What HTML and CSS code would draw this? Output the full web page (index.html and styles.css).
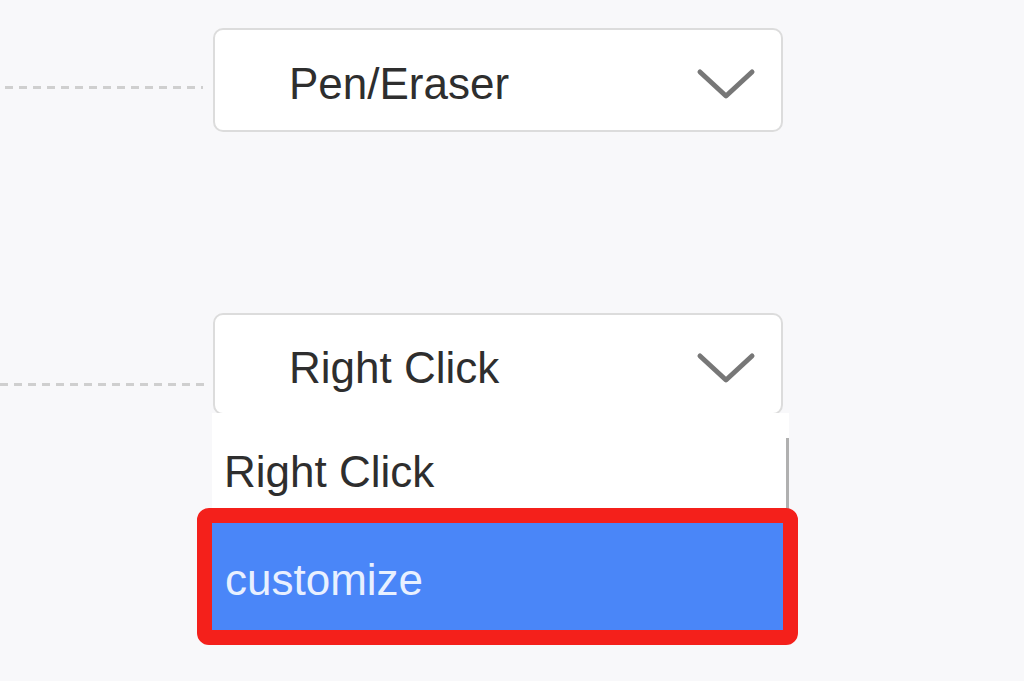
FILE: index.html
```html
<!DOCTYPE html>
<html>
<head>
<meta charset="utf-8">
<link rel="stylesheet" href="styles.css">
</head>
<body>
<div class="page">
  <div class="row row-1">
    <div class="dash dash-1"></div>
    <div class="select-group">
      <div class="select select-1">
        <span class="select-label">Pen/Eraser</span>
        <svg class="chevron" width="60" height="32" viewBox="0 0 60 32"><polyline points="4,4 30,28 56,4" fill="none" stroke="#777" stroke-width="5" stroke-linecap="round" stroke-linejoin="round"/></svg>
      </div>
    </div>
  </div>
  <div class="row row-2">
    <div class="dash dash-2"></div>
    <div class="select-group">
      <div class="select select-2">
        <span class="select-label">Right Click</span>
        <svg class="chevron" width="60" height="32" viewBox="0 0 60 32"><polyline points="4,4 30,28 56,4" fill="none" stroke="#777" stroke-width="5" stroke-linecap="round" stroke-linejoin="round"/></svg>
      </div>
      <ul class="options">
        <li class="option">Right Click</li>
        <li class="option option-active">customize</li>
      </ul>
    </div>
  </div>
</div>
</body>
</html>
```
FILE: styles.css
```css
html, body {
  margin: 0;
  padding: 0;
}
body {
  width: 1024px;
  height: 681px;
  overflow: hidden;
  background: #f8f8fa;
  font-family: "Liberation Sans", Arial, sans-serif;
  color: #2e2e2e;
}
.page {
  padding-top: 28px;
}
.row {
  display: flex;
  align-items: flex-start;
}
.row-2 {
  margin-top: 181px;
}
.dash {
  height: 3px;
  background: repeating-linear-gradient(90deg, #cfcfcf 0 8px, transparent 8px 14px);
}
.dash-1 {
  width: 198px;
  margin-left: 5px;
  margin-right: 10px;
  margin-top: 58px;
}
.dash-2 {
  width: 208px;
  margin-right: 5px;
  margin-top: 70px;
}
.select-group {
  display: flex;
  flex-direction: column;
}
.select {
  box-sizing: border-box;
  width: 570px;
  height: 104px;
  background: #fff;
  border: 2px solid #dcdcdc;
  border-radius: 10px;
  display: flex;
  align-items: center;
  justify-content: space-between;
  padding: 8px 25px 0 74px;
}
.select-2 {
  height: 102px;
}
.select-label {
  font-size: 44px;
}
.chevron {
  margin-top: 0;
  flex: none;
}
.options {
  position: relative;
  list-style: none;
  margin: -2px 0 0 -1px;
  padding: 0;
  width: 577px;
  background: #fff;
  font-size: 44px;
}
.options::after {
  content: "";
  position: absolute;
  right: 0;
  top: 25px;
  width: 3px;
  height: 110px;
  background: #b0b0b0;
}
.option {
  box-sizing: border-box;
  height: 110px;
  padding: 8px 0 0 12px;
  line-height: 102px;
  margin-right: 5px;
}
.option-active {
  position: relative;
  z-index: 1;
  height: 107px;
  padding: 6px 0 0 13px;
  line-height: 101px;
  background: #4a86f8;
  color: #e8f0ff;
}
.option-active::after {
  content: "";
  position: absolute;
  top: -15px;
  left: -15px;
  right: -14px;
  bottom: -15px;
  border: 15px solid #f4201b;
  border-radius: 12px;
}
```
